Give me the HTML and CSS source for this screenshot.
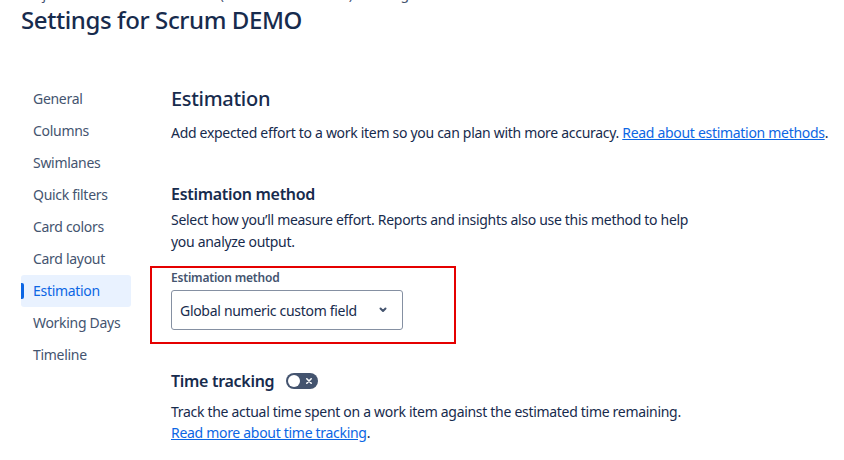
FILE: index.html
```html
<!DOCTYPE html>
<html lang="en">

<head>
    <meta charset="UTF-8">
    <meta name="viewport" content="width=device-width, initial-scale=1.0">
    <title>Settings for Scrum DEMO</title>
    <link rel="stylesheet" href="styles.css">
</head>

<body>
    <div class="breadcrumbs">
        <div class="crumb-line">Projects / Scrum DEMO / Board (Scrum DEMO board) / Settings</div>
    </div>
    <h1 class="page-title">Settings for Scrum DEMO</h1>

    <div class="layout">
        <nav class="side-nav">
            <a class="nav-item" href="#">General</a>
            <a class="nav-item" href="#">Columns</a>
            <a class="nav-item" href="#">Swimlanes</a>
            <a class="nav-item" href="#">Quick filters</a>
            <a class="nav-item" href="#">Card colors</a>
            <a class="nav-item" href="#">Card layout</a>
            <a class="nav-item active" href="#">Estimation</a>
            <a class="nav-item" href="#">Working Days</a>
            <a class="nav-item" href="#">Timeline</a>
        </nav>

        <main class="content">
            <h2 class="section-title">Estimation</h2>
            <p class="lead">Add expected effort to a work item so you can plan with more accuracy. <a href="#">Read about estimation methods</a>.</p>

            <h3 class="sub-title">Estimation method</h3>
            <p class="desc">Select how you’ll measure effort. Reports and insights also use this method to help you analyze output.</p>

            <div class="highlight-box">
                <label class="field-label" for="method">Estimation method</label>
                <div class="select">
                    <span id="method">Global numeric custom field</span>
                    <svg class="chevron" width="12" height="12" viewBox="0 0 12 12">
                        <path d="M3.5 4.5 L6 7 L8.5 4.5" fill="none" stroke="#44546F" stroke-width="2" stroke-linecap="round" stroke-linejoin="round" />
                    </svg>
                </div>
            </div>

            <div class="tracking-head">
                <h3 class="sub-title">Time tracking</h3>
                <span class="toggle">
                    <span class="knob"></span>
                    <svg class="toggle-x" width="8" height="8" viewBox="0 0 8 8">
                        <path d="M1.8 1.8 L6.2 6.2 M6.2 1.8 L1.8 6.2" stroke="#fff" stroke-width="1.6" stroke-linecap="round" />
                    </svg>
                </span>
            </div>
            <p class="desc tracking-desc">Track the actual time spent on a work item against the estimated time remaining.<br>
                <a href="#">Read more about time tracking</a>.</p>
        </main>
    </div>
</body>

</html>
```

FILE: styles.css
```css
body {
    margin: 0;
    font-family: "Noto Sans", Arial, sans-serif;
    font-size: 14px;
    letter-spacing: -0.3px;
    color: #172B4D;
    background-color: #fff;
}

a {
    color: #0C66E4;
}

.breadcrumbs {
    height: 4px;
    overflow: hidden;
    padding-left: 21px;
    color: #44546F;
}

.crumb-line {
    margin-top: -16px;
    line-height: 20px;
}

.page-title {
    margin: 0 0 0 21px;
    font-size: 24px;
    font-weight: 500;
    letter-spacing: -0.4px;
    line-height: 32px;
    color: #172B4D;
}

.layout {
    display: flex;
    gap: 40px;
    padding-left: 21px;
    margin-top: 47px;
}

.side-nav {
    width: 110px;
    display: flex;
    flex-direction: column;
    flex-shrink: 0;
}

.nav-item {
    height: 32px;
    line-height: 32px;
    padding-left: 12px;
    color: #44546F;
    text-decoration: none;
    border-radius: 3px;
    position: relative;
}

.nav-item.active {
    background-color: #E9F2FF;
    color: #0C66E4;
}

.nav-item.active::before {
    content: "";
    position: absolute;
    left: 0;
    top: 8px;
    width: 3px;
    height: 16px;
    background-color: #0C66E4;
    border-radius: 0 2px 2px 0;
}

.content {
    flex: 1;
}

.section-title {
    margin: 0;
    font-size: 20px;
    font-weight: 500;
    letter-spacing: -0.3px;
    line-height: 32px;
}

.lead {
    margin: 8px 0 0;
    line-height: 20px;
    color: #172B4D;
}

.sub-title {
    margin: 39px 0 0;
    font-size: 16px;
    font-weight: 600;
    line-height: 24px;
}

.desc {
    margin: 3px 0 0;
    line-height: 22px;
    max-width: 530px;
    color: #172B4D;
}

.highlight-box {
    width: 264px;
    margin: 13px 0 0 -21px;
    padding: 2px 19px 12px;
    border: 2px solid #E50000;
}

.field-label {
    display: block;
    font-size: 12px;
    font-weight: 600;
    letter-spacing: -0.2px;
    line-height: 16px;
    color: #44546F;
    margin-bottom: 4px;
}

.select {
    width: 232px;
    height: 40px;
    box-sizing: border-box;
    border: 1px solid #8590A2;
    border-radius: 3px;
    display: flex;
    align-items: center;
    justify-content: space-between;
    padding: 0 13px 0 8px;
    color: #172B4D;
}

.tracking-head {
    display: flex;
    align-items: center;
    gap: 12px;
    margin-top: 25px;
}

.tracking-head .sub-title {
    margin: 0;
}

.toggle {
    width: 32px;
    height: 16px;
    border-radius: 8px;
    background-color: #44546F;
    display: flex;
    align-items: center;
    justify-content: space-between;
    padding: 0 5px 0 2px;
    box-sizing: border-box;
}

.knob {
    width: 12px;
    height: 12px;
    border-radius: 50%;
    background-color: #fff;
}

.toggle-x {
    display: block;
}

.tracking-desc {
    margin-top: 8px;
    line-height: 21px;
    max-width: 560px;
}
```
